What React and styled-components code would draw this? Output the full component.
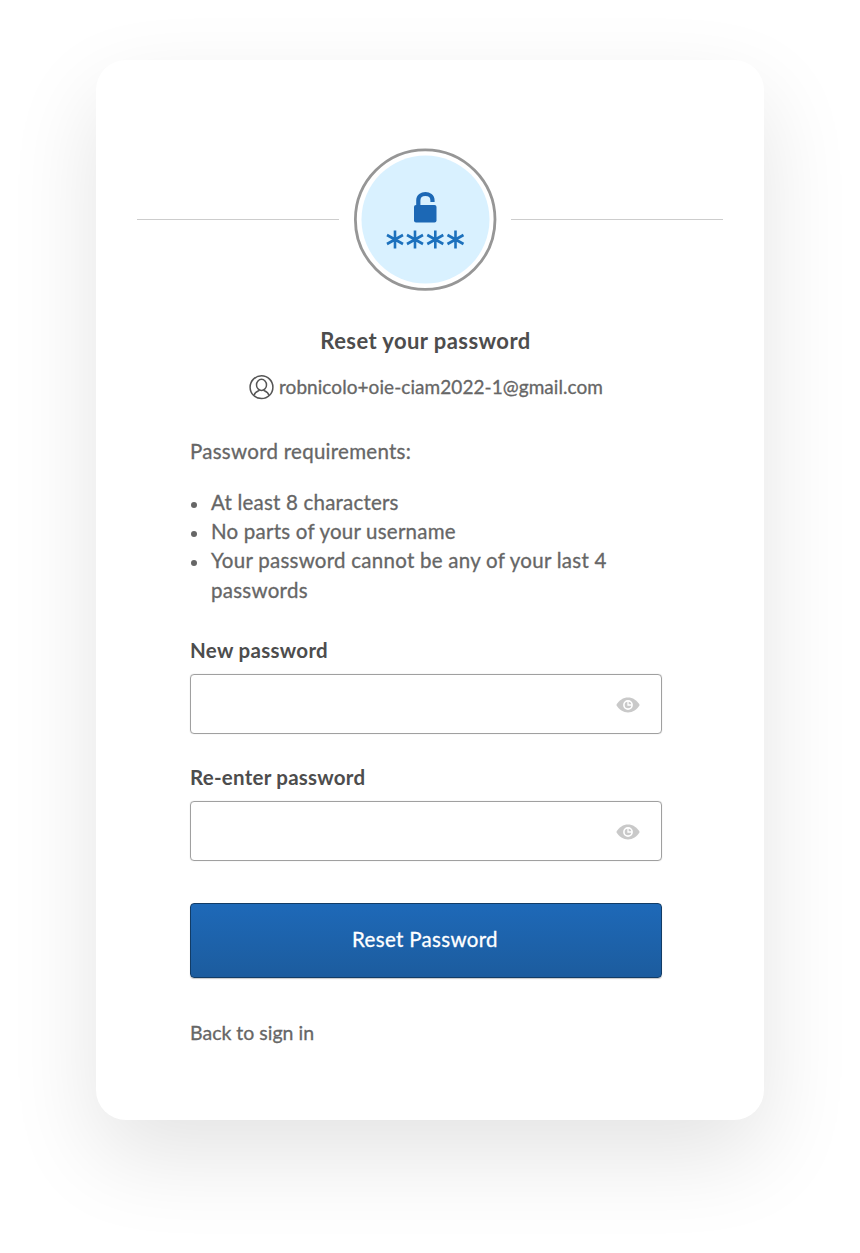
import React from "react";
import styled, { createGlobalStyle } from "styled-components";

const Global = createGlobalStyle`
  * { box-sizing: border-box; }
  body {
    margin: 0;
    background: #fff;
    color: #666;
    font-family: Lato, "Liberation Sans", sans-serif;
    font-size: 20.5px;
    line-height: 30px;
  }
`;

const Page = styled.main`
  height: 1253px;
  padding: 60px 96px 0;
  overflow: hidden;
`;

const Card = styled.section`
  width: 668px;
  height: 1060px;
  padding-top: 88px;
  border-radius: 30px;
  background: #fff;
  box-shadow: 0 36px 90px rgba(0, 0, 0, 0.11);
`;

const Header = styled.header`
  display: flex;
  align-items: center;
  padding: 0 41px;
`;

const Rule = styled.span`
  flex: 0 0 ${(p) => p.$width}px;
  height: 1px;
  background: #cdcdcd;
`;

const Badge = styled.div`
  display: flex;
  width: 143px;
  height: 143px;
  margin: 0 14px 0 15px;
`;

const Body = styled.form`
  width: 472px;
  margin: 35px 0 0 94px;
`;

const Title = styled.h1`
  margin: 0;
  padding-right: 1px;
  text-align: center;
  font-size: 22px;
  line-height: 30px;
  font-weight: 700;
  color: #4d4d4d;
  letter-spacing: 0.42px;
`;

const Identity = styled.div`
  display: flex;
  align-items: center;
  justify-content: center;
  gap: 5px;
  height: 30px;
  margin-top: 16px;
`;

const Text = styled.span`
  font-size: ${(p) => p.$size || 20.5}px;
  font-weight: 400;
  letter-spacing: ${(p) => p.$track || 0}px;
  white-space: nowrap;
  -webkit-text-stroke: 0.3px currentColor;
`;

const Intro = styled.p`
  margin: 34px 0 0;
`;

const Rules = styled.ul`
  margin: 22px 0 0;
  padding: 0;
  list-style: none;
`;

const RuleItem = styled.li`
  display: flex;
  line-height: 29.2px;

  &::before {
    content: "";
    flex: 0 0 6px;
    height: 6px;
    margin: 14px 14px 0 1px;
    border-radius: 50%;
    background: #666;
  }
`;

const Field = styled.div`
  margin-top: ${(p) => p.$top}px;
`;

const Label = styled.label`
  display: block;
  height: 30px;
  margin-bottom: 9px;
  font-weight: 700;
  color: #4d4d4d;
  letter-spacing: ${(p) => p.$track}px;
`;

const InputBox = styled.div`
  display: flex;
  align-items: center;
  height: 60px;
  padding: 2px 21px 0 0;
  border: 1px solid #a0a0a0;
  border-radius: 4px;
  box-shadow: 0 0 1px rgba(0, 0, 0, 0.25);
`;

const Input = styled.input`
  flex: 1;
  min-width: 0;
  height: 100%;
  padding: 0 15px;
  border: 0;
  outline: 0;
  background: transparent;
  font: inherit;
`;

const Submit = styled.button`
  display: block;
  width: 472px;
  height: 75px;
  margin-top: 42px;
  padding: 0 2px 3px 0;
  border: 1px solid #123c66;
  border-radius: 4px;
  background: linear-gradient(#1e69b8, #1c5c9e);
  box-shadow: 0 1px 1px rgba(0, 0, 0, 0.22);
  color: #fff;
  font: inherit;
`;

const Back = styled.a`
  display: block;
  width: max-content;
  margin-top: 39px;
`;

function LockMark() {
  return (
    <svg width="143" height="143" viewBox="0 0 143 143">
      <circle cx="71.2" cy="71.6" r="69.8" fill="#fff" stroke="#969696" strokeWidth="2.8" />
      <circle cx="71.5" cy="71.6" r="64" fill="#d9f1ff" />
      <rect x="60" y="57" width="22.5" height="17.5" rx="2" fill="#1c68b5" />
      <path d="M64.3 59V52.5C64.3 43.8 78.5 43.8 78.5 52.5V54" fill="none" stroke="#1c68b5" strokeWidth="4.2" />
      <g stroke="#1c71bd" strokeWidth="2.6">
        {[41, 61, 81.3, 101.5].map((x) => (
          <path key={x} d={`M${x} 82.5v18M${x - 8} 87l16 9M${x - 8} 96l16-9`} />
        ))}
      </g>
    </svg>
  );
}

function UserIcon() {
  return (
    <svg width="25" height="25" viewBox="0 0 25 25" fill="none" stroke="#555" strokeWidth="1.5">
      <circle cx="12.5" cy="12.2" r="11.4" />
      <ellipse cx="12.5" cy="9.9" rx="5" ry="5.6" />
      <path d="M4.9 20.5C5.8 17.2 8 16.4 9.8 15.6L10.1 14.4M20.1 20.5C19.2 17.2 17 16.4 15.2 15.6L14.9 14.4" />
    </svg>
  );
}

function EyeIcon() {
  return (
    <svg width="24" height="16" viewBox="0 0 24 16">
      <path d="M0.3 8C3.2 3.2 7.2 0.6 12 0.6S20.8 3.2 23.7 8C20.8 12.8 16.8 15.4 12 15.4S3.2 12.8 0.3 8Z" fill="#c9c9c9" />
      <circle cx="12" cy="8" r="4.1" fill="#c9c9c9" stroke="#fff" strokeWidth="1.6" />
      <path d="M12 4V8H16" fill="none" stroke="#fff" strokeWidth="1.3" />
    </svg>
  );
}

function PasswordField({ id, label, top, track }) {
  return (
    <Field $top={top}>
      <Label htmlFor={id} $track={track}>{label}</Label>
      <InputBox>
        <Input id={id} type="password" />
        <EyeIcon />
      </InputBox>
    </Field>
  );
}

export default function App() {
  return (
    <Page>
      <Global />
      <Card>
        <Header>
          <Rule $width={202} />
          <Badge><LockMark /></Badge>
          <Rule $width={212} />
        </Header>
        <Body onSubmit={(e) => e.preventDefault()}>
          <Title>Reset your password</Title>
          <Identity>
            <UserIcon />
            <Text $size={19} $track={0.06}>robnicolo+oie-ciam2022-1@gmail.com</Text>
          </Identity>
          <Intro><Text $track={0.27}>Password requirements:</Text></Intro>
          <Rules>
            <RuleItem><Text $track={0.2}>At least 8 characters</Text></RuleItem>
            <RuleItem><Text $track={0.22}>No parts of your username</Text></RuleItem>
            <RuleItem><Text $track={0.26}>Your password cannot be any of your last 4<br />passwords</Text></RuleItem>
          </Rules>
          <PasswordField id="new-password" label="New password" top={30.2} track={0.3} />
          <PasswordField id="repeat-password" label="Re-enter password" top={28} track={0.24} />
          <Submit type="submit"><Text $track={0.32}>Reset Password</Text></Submit>
          <Back><Text $size={19.5}>Back to sign in</Text></Back>
        </Body>
      </Card>
    </Page>
  );
}
